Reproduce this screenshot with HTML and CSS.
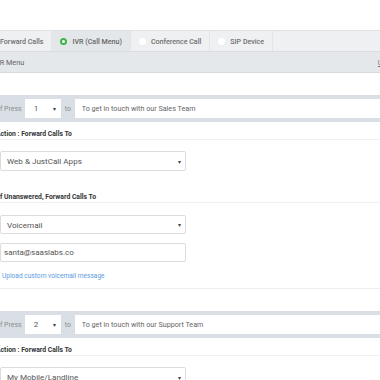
FILE: index.html
```html
<!DOCTYPE html>
<html lang="en">
<head>
    <meta charset="UTF-8">
    <meta name="viewport" content="width=device-width, initial-scale=1.0">
    <title>IVR Call Menu</title>
    <link rel="stylesheet" href="styles.css">
</head>
<body>
    <div class="page">
        <div class="tabs">
            <div class="tab"><span class="radio"></span>Forward Calls</div>
            <div class="tab active"><span class="radio on"></span>IVR (Call Menu)</div>
            <div class="tab"><span class="radio"></span>Conference Call</div>
            <div class="tab"><span class="radio"></span>SIP Device</div>
        </div>
        <div class="subbar">
            <span>IVR Menu</span>
            <a href="#" class="update">Update</a>
        </div>

        <div class="ivr-block">
            <div class="press-row">
                <span class="press-label">If Press</span>
                <div class="digit">1 <span class="caret">&#9662;</span></div>
                <span class="to">to</span>
                <input type="text" class="desc" value="To get in touch with our Sales Team">
            </div>
            <div class="section-label">Action : Forward Calls To</div>
            <div class="select first">Web &amp; JustCall Apps <span class="caret">&#9662;</span></div>
            <div class="section-label tall">If Unanswered, Forward Calls To</div>
            <div class="select vm">Voicemail <span class="caret">&#9662;</span></div>
            <input type="email" class="field" value="santa@saaslabs.co">
            <a href="#" class="upload">Upload custom voicemail message</a>
        </div>

        <div class="ivr-block">
            <div class="press-row">
                <span class="press-label">If Press</span>
                <div class="digit">2 <span class="caret">&#9662;</span></div>
                <span class="to">to</span>
                <input type="text" class="desc" value="To get in touch with our Support Team">
            </div>
            <div class="section-label">Action : Forward Calls To</div>
            <div class="select first">My Mobile/Landline <span class="caret">&#9662;</span></div>
        </div>
    </div>
</body>
</html>
```

FILE: styles.css
```css
body {
    margin: 0;
    padding: 0;
    background-color: #fff;
    font-family: Roboto, "Liberation Sans", Arial, sans-serif;
    overflow: hidden;
    width: 380px;
    height: 380px;
}
.page {
    margin-left: -10px;
    padding-top: 30px;
    width: 430px;
}
.tabs {
    display: flex;
    height: 21px;
    margin-left: -10px;
    background-color: #eef0f2;
    border-top: 1px solid #dfe2e5;
    box-sizing: border-box;
}
.tab {
    display: flex;
    align-items: center;
    padding: 0 8px;
    font-size: 7.1px;
    font-weight: 500;
    color: #6f6f6f;
    border-right: 1px solid #e2e5e8;
}
.tab.active {
    background-color: #e4e7ea;
    color: #666;
}
.radio {
    width: 7px;
    height: 7px;
    border-radius: 50%;
    background-color: #fff;
    margin-right: 5px;
    box-sizing: border-box;
}
.radio.on {
    border: 2px solid #3db34a;
}
.subbar {
    display: flex;
    justify-content: space-between;
    align-items: center;
    height: 20px;
    padding-left: 3px;
    background-color: #e5e8eb;
    border-top: 1px solid #d9dde1;
    border-bottom: 1px solid #d6dade;
    font-size: 7.3px;
    color: #666;
}
.update {
    color: #777;
    margin-right: 19px;
    font-size: 7.3px;
}
.ivr-block {
    padding: 22px 0 7px 10px;
    border-bottom: 1px solid #eeeeee;
}
.press-row {
    display: flex;
    align-items: center;
    height: 27px;
    margin-left: -10px;
    padding-left: 8px;
    background-color: #d9dfe4;
    font-size: 7px;
    color: #8a8f94;
}
.press-label {
    margin-right: 3px;
    white-space: nowrap;
}
.digit {
    display: flex;
    justify-content: space-between;
    align-items: center;
    width: 36px;
    height: 19px;
    padding: 0 5px 0 9px;
    box-sizing: border-box;
    background-color: #fff;
    color: #555;
    font-size: 8px;
    margin-right: 4px;
}
.caret {
    font-size: 6px;
    color: #444;
}
.to {
    width: 10px;
}
.desc {
    flex: 1;
    height: 19px;
    border: none;
    padding: 0 7px;
    font-family: Roboto, "Liberation Sans", Arial, sans-serif;
    font-size: 7.2px;
    color: #666;
    box-sizing: border-box;
}
.section-label {
    margin-left: -4px;
    margin-right: -10px;
    padding-top: 7px;
    line-height: 10px;
    font-size: 6.8px;
    font-weight: bold;
    color: #333;
    border-bottom: 1px solid #f0f0f0;
}
.section-label.tall {
    padding-top: 21px;
    margin-left: -2px;
}
.select {
    display: flex;
    justify-content: space-between;
    align-items: center;
    width: 186px;
    height: 20px;
    margin-top: 11px;
    padding: 0 4px 0 6px;
    box-sizing: border-box;
    border: 1px solid #dcdcdc;
    border-radius: 2px;
    font-size: 8.1px;
    color: #555;
}
.select.vm {
    height: 19px;
    margin-top: 12px;
}
.field {
    display: block;
    width: 186px;
    height: 19px;
    margin: 9px 0 0 0;
    padding: 0 3px;
    box-sizing: border-box;
    border: 1px solid #dcdcdc;
    border-radius: 2px;
    font-family: Roboto, "Liberation Sans", Arial, sans-serif;
    font-size: 8px;
    color: #555;
}
.upload {
    display: block;
    margin: 9px 0 0 2px;
    line-height: 10px;
    font-size: 6.6px;
    color: #5b9be0;
    text-decoration: none;
}
```
